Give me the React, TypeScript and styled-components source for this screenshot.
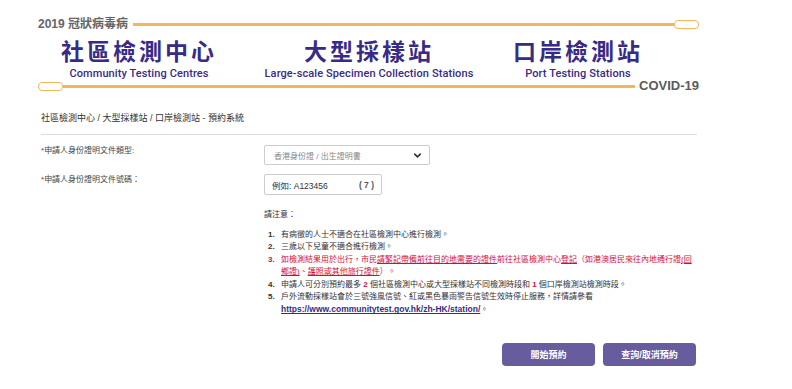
import React from "react";
import styled, { createGlobalStyle } from "styled-components";
import { ChevronDown } from "lucide-react";

const GlobalStyle = createGlobalStyle`
  body {
    margin: 0;
    background: #ffffff;
    font-family: "Liberation Sans", "Noto Sans CJK TC", sans-serif;
    color: #333333;
  }
`;

const ORANGE = "#f2b65c";
const PURPLE = "#382b86";
const RED = "#d0103a";

const Header = styled.header`
  width: 661px;
  margin-left: 38px;
  padding-top: 17px;
`;

const LineRow = styled.div<{ $h: number }>`
  display: flex;
  align-items: center;
  height: ${(p) => p.$h}px;
`;

const Tag = styled.span`
  font-size: 12px;
  font-weight: 700;
  color: #666;
  line-height: 14px;
  white-space: nowrap;
`;

const Rule = styled.div<{ $gap?: number }>`
  flex: 1;
  height: 3px;
  margin-left: ${(p) => p.$gap ?? 0}px;
  background: ${ORANGE};
`;

const Capsule = styled.div`
  width: 25px;
  height: 9px;
  box-sizing: border-box;
  border: 1.5px solid ${ORANGE};
  border-radius: 4px;
  background: #fff;
`;

const Titles = styled.div`
  display: grid;
  grid-template-columns: 202px 258px 160px;
  margin-top: 6px;
`;

const TitleCol = styled.div`
  display: flex;
  flex-direction: column;
  align-items: center;
`;

const TitleZh = styled.div`
  font-family: "Noto Sans CJK TC", sans-serif;
  font-size: 23px;
  font-weight: 700;
  letter-spacing: 3px;
  line-height: 26px;
  color: ${PURPLE};
  white-space: nowrap;
`;

const TitleEn = styled.div`
  margin-top: 4px;
  font-family: Roboto, sans-serif;
  font-size: 11px;
  font-weight: 500;
  letter-spacing: 0.1px;
  line-height: 13px;
  color: ${PURPLE};
  white-space: nowrap;
`;

const Covid = styled.span`
  margin-left: 4px;
  font-size: 13px;
  font-weight: 700;
  line-height: 12px;
  color: #5b5b5b;
`;

const Main = styled.main`
  width: 656px;
  margin-left: 41px;
`;

const Crumb = styled.div`
  margin-top: 20px;
  font-size: 9px;
  line-height: 13px;
  color: #333;
`;

const Divider = styled.hr`
  margin: 9px 0 0;
  border: 0;
  border-top: 1px solid #dddddd;
`;

const FormRow = styled.div<{ $top: number }>`
  display: flex;
  align-items: flex-start;
  margin-top: ${(p) => p.$top}px;
`;

const Label = styled.label`
  width: 223px;
  flex: none;
  font-size: 8px;
  line-height: 12px;
  color: #444;
`;

const Star = styled.span`
  color: ${RED};
`;

const Select = styled.div`
  width: 166px;
  height: 20px;
  box-sizing: border-box;
  border: 1px solid #cccccc;
  border-radius: 2px;
  display: flex;
  align-items: center;
  justify-content: space-between;
  padding: 0 6px 0 9px;
  font-size: 8px;
  color: #888;
`;

const Field = styled.div`
  width: 118px;
  height: 21px;
  box-sizing: border-box;
  border: 1px solid #cccccc;
  border-radius: 2px;
  display: flex;
  align-items: center;
  justify-content: space-between;
  padding: 0 7px;
  font-size: 8.5px;
  color: #333;
`;

const Seven = styled.span`
  font-weight: 700;
  color: #555;
`;

const Notes = styled.section`
  margin-left: 223px;
  margin-top: 14px;
  font-size: 8px;
  line-height: 12px;
  color: #333;
`;

const List = styled.ol`
  list-style: none;
  margin: 8px 0 0;
  padding: 0 0 0 4px;
`;

const Item = styled.li<{ $red?: boolean }>`
  display: flex;
  line-height: 12.4px;
  color: ${(p) => (p.$red ? RED : "#333")};
`;

const Num = styled.span`
  width: 13px;
  flex: none;
  font-weight: 700;
`;

const U = styled.span`
  text-decoration: underline;
`;

const Hot = styled.b`
  color: ${RED};
`;

const Link = styled.a`
  color: ${PURPLE};
  font-weight: 700;
  font-size: 8.5px;
  text-decoration: underline;
`;

const Actions = styled.div`
  display: flex;
  justify-content: flex-end;
  gap: 8px;
  margin-top: 26px;
  padding-right: 1px;
`;

const Button = styled.button`
  width: 93px;
  height: 23px;
  border: 0;
  border-radius: 4px;
  background: #675c9d;
  color: #fff;
  font-family: "Liberation Sans", "Noto Sans CJK TC", sans-serif;
  font-size: 9px;
  font-weight: 700;
`;

export default function App() {
  return (
    <>
      <GlobalStyle />
      <Header>
        <LineRow $h={14}>
          <Tag>2019 冠狀病毒病</Tag>
          <Rule $gap={5} />
          <Capsule />
        </LineRow>
        <Titles>
          <TitleCol>
            <TitleZh>社區檢測中心</TitleZh>
            <TitleEn>Community Testing Centres</TitleEn>
          </TitleCol>
          <TitleCol>
            <TitleZh>大型採樣站</TitleZh>
            <TitleEn>Large-scale Specimen Collection Stations</TitleEn>
          </TitleCol>
          <TitleCol>
            <TitleZh>口岸檢測站</TitleZh>
            <TitleEn>Port Testing Stations</TitleEn>
          </TitleCol>
        </Titles>
        <LineRow $h={12}>
          <Capsule />
          <Rule />
          <Covid>COVID-19</Covid>
        </LineRow>
      </Header>

      <Main>
        <Crumb>社區檢測中心 / 大型採樣站 / 口岸檢測站 - 預約系統</Crumb>
        <Divider />

        <FormRow $top={10}>
          <Label>
            <Star>*</Star>申請人身份證明文件類型:
          </Label>
          <Select>
            <span>香港身份證 / 出生證明書</span>
            <ChevronDown size={11} strokeWidth={3.5} color="#333" />
          </Select>
        </FormRow>
        <FormRow $top={9}>
          <Label>
            <Star>*</Star>申請人身份證明文件號碼：
          </Label>
          <Field>
            <span>例如: A123456</span>
            <Seven>( 7 )</Seven>
          </Field>
        </FormRow>

        <Notes>
          請注意：
          <List>
            <Item>
              <Num>1.</Num>
              <span>有病徵的人士不適合在社區檢測中心進行檢測。</span>
            </Item>
            <Item>
              <Num>2.</Num>
              <span>三歲以下兒童不適合進行檢測。</span>
            </Item>
            <Item $red>
              <Num>3.</Num>
              <div>
                <div>
                  如檢測結果用於出行，市民<U>請緊記帶備前往目的地需要的證件</U>前往社區檢測中心
                  <U>登記</U>（如港澳居民來往內地通行證<U>(回</U>
                </div>
                <div>
                  <U>鄉證)</U>、<U>護照或其他旅行證件</U>）。
                </div>
              </div>
            </Item>
            <Item>
              <Num>4.</Num>
              <span>
                申請人可分別預約最多 <Hot>2</Hot> 個社區檢測中心或大型採樣站不同檢測時段和 <Hot>1</Hot>{" "}
                個口岸檢測站檢測時段。
              </span>
            </Item>
            <Item>
              <Num>5.</Num>
              <div>
                <div>戶外流動採樣站會於三號強風信號、紅或黑色暴雨警告信號生效時停止服務，詳情請參看</div>
                <div>
                  <Link href="#">https://www.communitytest.gov.hk/zh-HK/station/</Link>。
                </div>
              </div>
            </Item>
          </List>
        </Notes>

        <Actions>
          <Button>開始預約</Button>
          <Button>查詢/取消預約</Button>
        </Actions>
      </Main>
    </>
  );
}
